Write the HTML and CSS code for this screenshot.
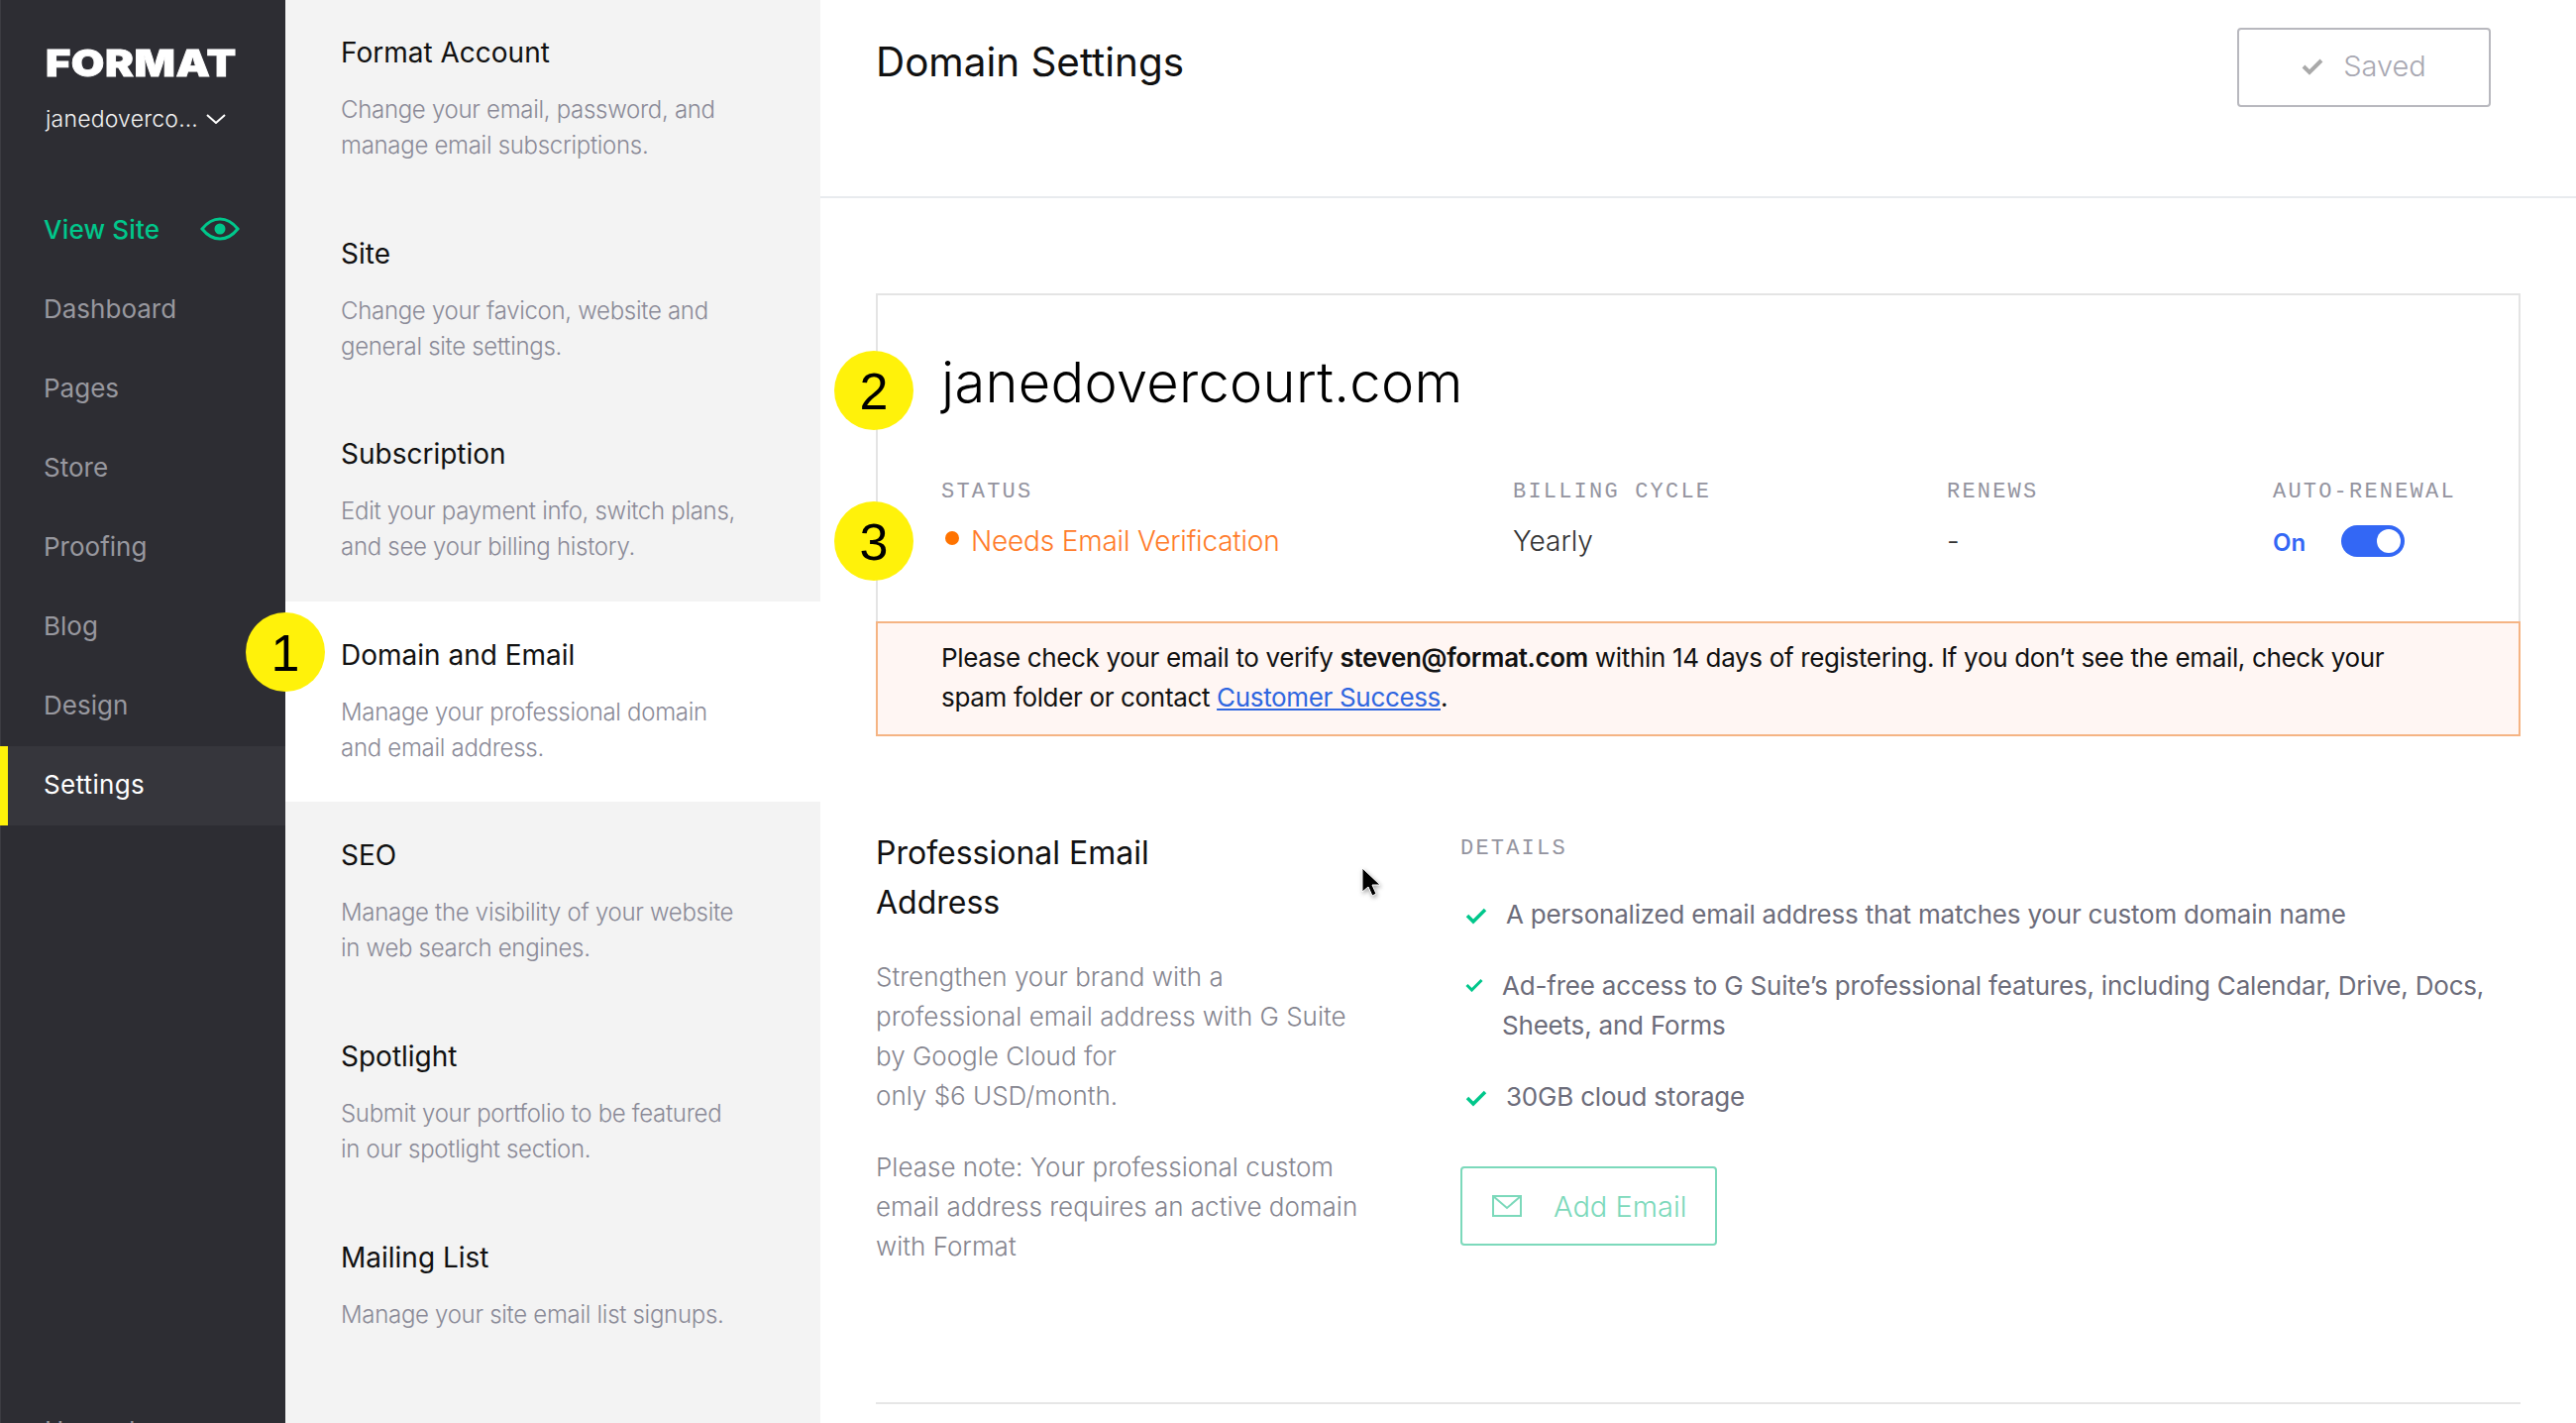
FILE: index.html
```html
<!DOCTYPE html>
<html lang="en">
<head>
<meta charset="utf-8">
<title>Domain Settings</title>
<link rel="stylesheet" href="styles.css">
</head>
<body>
<div class="app">
  <aside class="sidebar">
    <div class="logo">FORMAT</div>
    <div class="account">janedoverco… <svg class="chev" viewBox="0 0 20 10" width="20" height="10"><path d="M1 1l9 8 9-8" fill="none" stroke="#fff" stroke-width="2"/></svg></div>
    <nav class="nav">
      <a class="nav-item view">View Site
        <svg class="eye" viewBox="0 0 40 24" width="40" height="24"><path d="M2 12C8 4.500 14 2 20 2s12 2.500 18 10c-6 7.500-12 10-18 10S8 19.500 2 12z" fill="none" stroke="#00c78b" stroke-width="3"/><circle cx="20" cy="12" r="5.500" fill="#00c78b"/></svg>
      </a>
      <a class="nav-item">Dashboard</a>
      <a class="nav-item">Pages</a>
      <a class="nav-item">Store</a>
      <a class="nav-item">Proofing</a>
      <a class="nav-item">Blog</a>
      <a class="nav-item">Design</a>
      <a class="nav-item active">Settings</a>
    </nav>
    <a class="help">Upgrade</a>
  </aside>
  <section class="menu">
    <div class="menu-item"><h3>Format Account</h3><p>Change your email, password, and<br>manage email subscriptions.</p></div>
    <div class="menu-item"><h3>Site</h3><p>Change your favicon, website and<br>general site settings.</p></div>
    <div class="menu-item"><h3>Subscription</h3><p>Edit your payment info, switch plans,<br>and see your billing history.</p></div>
    <div class="menu-item current"><h3>Domain and Email</h3><p>Manage your professional domain<br>and email address.</p></div>
    <div class="menu-item"><h3>SEO</h3><p>Manage the visibility of your website<br>in web search engines.</p></div>
    <div class="menu-item"><h3>Spotlight</h3><p>Submit your portfolio to be featured<br>in our spotlight section.</p></div>
    <div class="menu-item"><h3>Mailing List</h3><p>Manage your site email list signups.</p></div>
  </section>
  <main class="main">
    <header class="head">
      <h1>Domain Settings</h1>
      <button class="saved"><svg viewBox="0 0 22 18" width="22" height="18"><path d="M2 9l6 6L20 3" fill="none" stroke="#a9a9a9" stroke-width="4"/></svg><span>Saved</span></button>
    </header>
    <div class="content">
      <div class="card">
        <div class="card-top">
          <h2>janedovercourt.com</h2>
          <div class="facts">
            <div><div class="label">STATUS</div><div class="value warn"><i class="dot"></i>Needs Email Verification</div></div>
            <div><div class="label">BILLING CYCLE</div><div class="value">Yearly</div></div>
            <div><div class="label">RENEWS</div><div class="value">-</div></div>
            <div><div class="label">AUTO-RENEWAL</div><div class="value toggle-row"><b>On</b><span class="toggle"><span class="knob"></span></span></div></div>
          </div>
        </div>
        <div class="alert">Please check your email to verify <strong>steven@format.com</strong> within 14 days of registering. If you don’t see the email, check your<br>spam folder or contact <a>Customer Success</a>.</div>
      </div>
      <div class="pro">
        <div class="pro-left">
          <h4>Professional Email<br>Address</h4>
          <p>Strengthen your brand with a<br>professional email address with G Suite<br>by Google Cloud for<br>only $6 USD/month.</p>
          <p>Please note: Your professional custom<br>email address requires an active domain<br>with Format</p>
        </div>
        <div class="pro-right">
          <div class="label details">DETAILS</div>
          <ul class="checks">
            <li class="big"><svg viewBox="0 0 22 18" width="22" height="18"><path d="M2 9l6 6L20 3" fill="none" stroke="#00c78b" stroke-width="3.500"/></svg><span>A personalized email address that matches your custom domain name</span></li>
            <li class="small"><svg viewBox="0 0 18 14" width="18" height="14"><path d="M1.500 7l5 5L16.500 2" fill="none" stroke="#00c78b" stroke-width="3"/></svg><span>Ad-free access to G Suite’s professional features, including Calendar, Drive, Docs,<br>Sheets, and Forms</span></li>
            <li class="big"><svg viewBox="0 0 22 18" width="22" height="18"><path d="M2 9l6 6L20 3" fill="none" stroke="#00c78b" stroke-width="3.500"/></svg><span>30GB cloud storage</span></li>
          </ul>
          <button class="add"><svg viewBox="0 0 30 22" width="30" height="22"><path d="M1 1h28v20H1zM1 1l14 12L29 1" fill="none" stroke="#7cd9bb" stroke-width="2"/></svg><span>Add Email</span></button>
        </div>
      </div>
      <hr class="rule">
    </div>
  </main>
  <div class="pin pin-1">1</div>
  <div class="pin pin-2">2</div>
  <div class="pin pin-3">3</div>
  <svg class="cursor" viewBox="0 0 22 32" width="22" height="32"><path d="M2 1v24l6-5 4 9 4-2-4-9h8z" fill="#000" stroke="#fff" stroke-width="1"/></svg>
</div>
</body>
</html>
```
FILE: styles.css
```css
* { box-sizing: border-box; }
html, body { margin: 0; height: 100%; overflow: hidden; background: #fff; }
body { font-family: Inter, "Liberation Sans", sans-serif; color: #111; }
h1, h2, h3, h4, p, ul { margin: 0; padding: 0; font-weight: 400; }
.app { display: flex; height: 1436px; width: 2600px; position: relative; overflow: hidden; }

.sidebar { width: 288px; flex: none; background: #2d2d33; box-shadow: inset 1px 0 #3c3c42; padding-top: 46px; display: flex; flex-direction: column; overflow: hidden; }
.logo { margin-left: 46px; width: 192px; color: #fff; font-weight: 900; font-size: 37px; line-height: 36px; letter-spacing: 0.5px; transform: scaleX(1.17); transform-origin: left center; -webkit-text-stroke: 0.8px #fff; white-space: nowrap; }
.account { margin: 22px 0 0 46px; color: #f2f2f2; font-size: 23px; letter-spacing: 0.2px; line-height: 32px; display: flex; align-items: center; gap: 8px; white-space: nowrap; font-weight: 300; }
.chev { flex: none; }
.nav { margin-top: 57px; display: flex; flex-direction: column; }
.nav-item { height: 80px; display: flex; align-items: center; padding: 0 0 4px 44px; font-size: 26px; color: #98989f; }
.nav-item.view { color: #00c78b; font-weight: 500; letter-spacing: 0.2px; gap: 41px; }
.nav-item.active { color: #fff; background: #36363c; border-left: 8px solid #fff20a; padding-left: 36px; letter-spacing: 0.3px; }
.help { margin: 595px 0 0 45px; font-size: 26px; color: #98989f; white-space: nowrap; }

.menu { width: 540px; flex: none; background: #f3f3f3; margin-top: -1px; height: 1440px; overflow: hidden; }
.menu-item { height: 202.600px; padding: 36px 56px 0; }
.menu-item.current { background: #fff; }
.menu-item h3 { font-size: 28px; line-height: 36px; color: #111; }
.menu-item p { margin-top: 22px; font-size: 24px; letter-spacing: -0.3px; line-height: 36px; color: #8a8a97; font-weight: 300; white-space: nowrap; }

.main { flex: 1; min-width: 0; }
.head { height: 200px; border-bottom: 2px solid #e8ebee; padding: 28px 86px 0 56px; display: flex; justify-content: space-between; align-items: flex-start; }
.head h1 { font-size: 40.400px; line-height: 68px; margin-top: 1px; color: #111; }
.saved { width: 256px; height: 80px; background: #fff; border: 2px solid #b8b8be; border-radius: 4px; display: flex; align-items: center; justify-content: center; gap: 20px; padding-bottom: 4px; font: 300 29px Inter, sans-serif; color: #a8a8b2; }

.content { padding: 96px 56px 0; }
.card { border: 2px solid #e4e4e4; }
.card-top { height: 329px; padding: 45px 0 0 64px; }
.card-top h2 { font-size: 56px; line-height: 86px; color: #000; font-weight: 300; letter-spacing: 0.3px; }
.facts { margin-top: 54px; display: grid; grid-template-columns: 577px 438px 329px 1fr; }
.label { font-family: "Liberation Mono", monospace; font-size: 22px; line-height: 28px; letter-spacing: 2.200px; color: #94949f; }
.value { margin-top: 15px; font-size: 28px; line-height: 40px; color: #333; font-weight: 300; display: flex; align-items: center; }
.warn { color: #ff7b29; letter-spacing: -0.2px; }
.dot { width: 14px; height: 14px; border-radius: 50%; background: #ff7300; margin: 0 12px 0 4px; position: relative; top: -3px; }
.toggle-row { gap: 36px; }
.toggle-row b { color: #3367f5; font-size: 24px; font-weight: 600; position: relative; top: 2px; }
.toggle { width: 64px; height: 32px; background: #3367f5; border-radius: 16px; display: flex; justify-content: flex-end; align-items: center; padding-right: 4px; }
.knob { width: 24px; height: 24px; border-radius: 50%; background: #fff; }
.alert { margin: 0 -2px -2px; height: 116px; background: #fff6f3; border: 2px solid #f5b483; padding: 15px 64px 0; font-size: 26px; letter-spacing: -0.34px; line-height: 40px; color: #111; white-space: nowrap; }
.alert strong { font-weight: 600; }
.alert a { color: #2f66e0; text-decoration: underline; }

.pro { display: flex; margin-top: 93px; }
.pro-left { width: 590px; flex: none; }
.pro-left h4 { font-size: 32px; line-height: 50px; color: #111; }
.pro-left p { margin-top: 30px; font-size: 26px; line-height: 40px; color: #85858f; font-weight: 300; white-space: nowrap; }
.pro-left p + p { margin-top: 32px; }
.details { margin-top: 7px; }
.checks { list-style: none; margin-top: 32px; }
.checks li { display: flex; align-items: flex-start; font-size: 26px; letter-spacing: -0.2px; line-height: 40px; color: #6c6c7a; white-space: nowrap; }
.checks li svg { flex: none; margin: 12px 0 0 5px; }
.checks li.big span { margin-left: 19px; }
.checks li.small { margin: 32px 0; }
.checks li.small span { margin-left: 19px; }
.add { margin-top: 50px; width: 259px; height: 80px; background: #fff; border: 2px solid #7cd9bb; border-radius: 4px; display: flex; align-items: center; padding-left: 30px; gap: 32px; font: 300 29px Inter, sans-serif; color: #7cd9bb; }
.rule { border: 0; border-top: 2px solid #e6e6e6; margin: 137px 0 0; }

.pin { position: absolute; width: 80px; height: 80px; border-radius: 50%; background: #fff20a; color: #000; font: 400 52px/82px "Liberation Sans", Arial, sans-serif; text-align: center; }
.pin-1 { left: 248px; top: 618px; }
.pin-2 { left: 842px; top: 354px; }
.pin-3 { left: 842px; top: 506px; }
.cursor { position: absolute; left: 1373px; top: 875px; filter: drop-shadow(1px 2px 2px rgba(0,0,0,.35)); }
```
